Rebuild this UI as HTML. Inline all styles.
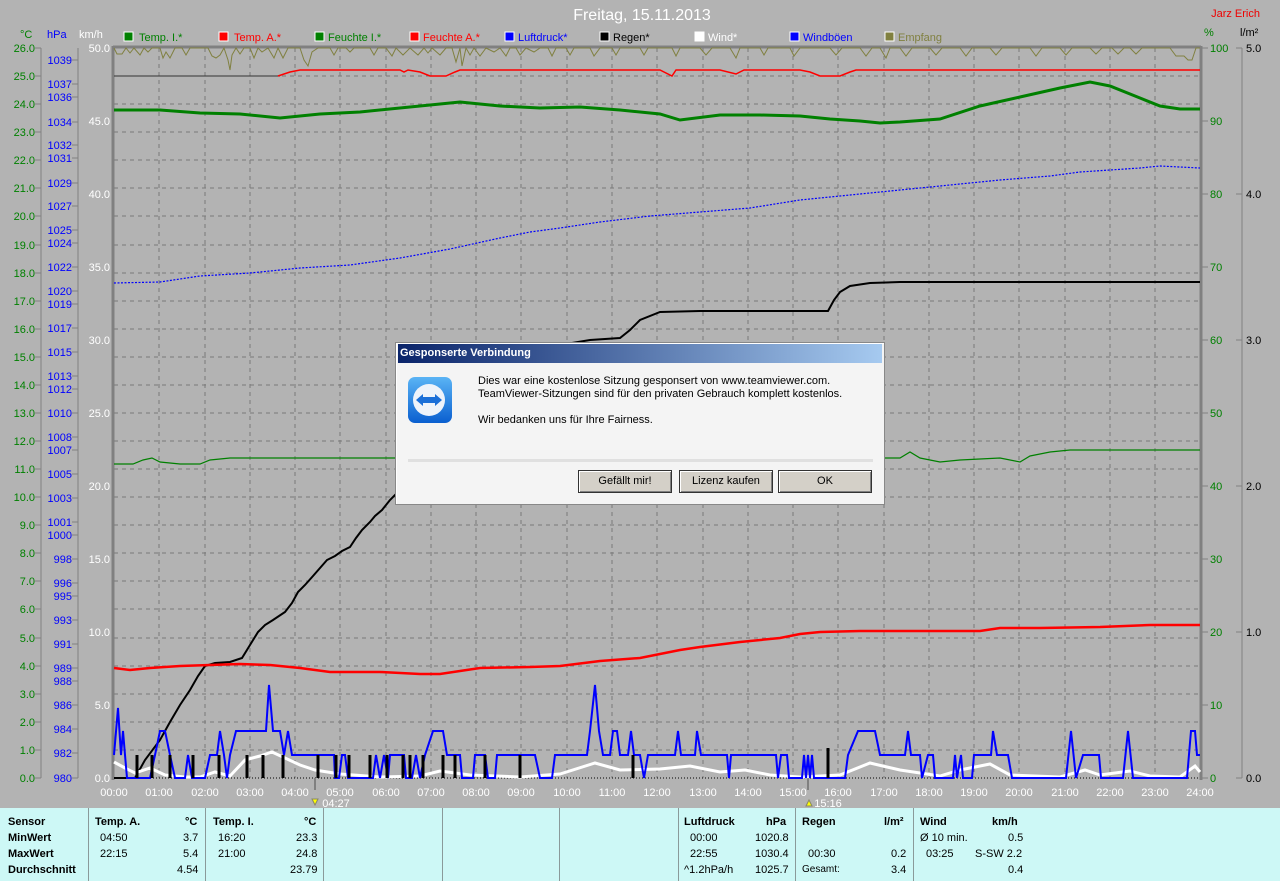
<!DOCTYPE html>
<html><head><meta charset="utf-8"><style>
html,body{margin:0;padding:0;width:1280px;height:881px;overflow:hidden;background:#b3b3b3;font-family:"Liberation Sans",sans-serif}
svg text{font-family:"Liberation Sans",sans-serif}
.tbl{position:absolute;left:0;top:808px;width:1280px;height:73px;background:#cdf8f6;font-size:11px;color:#000}
.tbl div{position:absolute;white-space:nowrap}
.sep{top:0;height:73px;width:1px;background:#8a9a9a}
.b{font-weight:bold}
.dlg{position:absolute;left:395px;top:342px;width:488px;height:161px;background:#f4f4f4;border:1px solid #888;box-shadow:inset 1px 1px 0 #fff}
.ttl{position:absolute;left:2px;top:1px;right:2px;height:19px;background:linear-gradient(to right,#0a246a,#a6caf0);color:#fff;font:bold 11px "Liberation Sans",sans-serif;line-height:19px;padding-left:2px}
.msg{position:absolute;left:82px;font-size:11px;color:#000;white-space:nowrap}
.btn{position:absolute;top:127px;height:21px;background:#d4d0c8;border:1px solid #333;box-shadow:inset 1px 1px 0 #fff,inset -1px -1px 0 #808080;font-size:11px;text-align:center;line-height:21px;color:#000}
</style></head><body>
<svg width="1280" height="808" style="position:absolute;left:0;top:0" xmlns="http://www.w3.org/2000/svg">
<text x="642" y="20" fill="#fff" font-size="16" text-anchor="middle">Freitag, 15.11.2013</text>
<text x="1260" y="17" fill="#e00" font-size="11" text-anchor="end">Jarz Erich</text>
<g font-size="11">
<text x="20" y="38" fill="#008000">°C</text><text x="47" y="38" fill="#00f">hPa</text><text x="79" y="38" fill="#fff">km/h</text>
<text x="1204" y="36" fill="#008000">%</text><text x="1240" y="36" fill="#000">l/m²</text>
<rect x="124" y="32" width="9" height="9" fill="#008000" stroke="#fff"/><text x="139" y="41" fill="#008000">Temp. I.*</text>
<rect x="219" y="32" width="9" height="9" fill="#f00" stroke="#fff"/><text x="234" y="41" fill="#f00">Temp. A.*</text>
<rect x="315" y="32" width="9" height="9" fill="#008000" stroke="#fff"/><text x="328" y="41" fill="#008000">Feuchte I.*</text>
<rect x="410" y="32" width="9" height="9" fill="#f00" stroke="#fff"/><text x="423" y="41" fill="#f00">Feuchte A.*</text>
<rect x="505" y="32" width="9" height="9" fill="#00f" stroke="#fff"/><text x="518" y="41" fill="#00f">Luftdruck*</text>
<rect x="600" y="32" width="9" height="9" fill="#000" stroke="#fff"/><text x="613" y="41" fill="#000">Regen*</text>
<rect x="695" y="32" width="9" height="9" fill="#fff" stroke="#fff"/><text x="708" y="41" fill="#fff">Wind*</text>
<rect x="790" y="32" width="9" height="9" fill="#00f" stroke="#fff"/><text x="803" y="41" fill="#00f">Windböen</text>
<rect x="885" y="32" width="9" height="9" fill="#808040" stroke="#fff"/><text x="898" y="41" fill="#808040">Empfang</text>
</g>
<!-- axes lines -->
<g stroke="#808080" stroke-width="1">
<line x1="41" y1="48" x2="41" y2="778"/><line x1="78" y1="48" x2="78" y2="778"/>
<line x1="1242" y1="48" x2="1242" y2="778"/>
</g>
<line x1="113" y1="46" x2="113" y2="780" stroke="#808080" stroke-width="3"/>
<line x1="1201" y1="46" x2="1201" y2="780" stroke="#808080" stroke-width="3"/>
<line x1="113" y1="47" x2="1201" y2="47" stroke="#808080" stroke-width="3"/>
<!-- grid -->
<g stroke="#7a7a7a" stroke-dasharray="4,4" stroke-width="1">
<path d="M114 76H1200M114 104H1200M114 132H1200M114 160H1200M114 188H1200M114 216H1200M114 245H1200M114 273H1200M114 301H1200M114 329H1200M114 357H1200M114 385H1200M114 413H1200M114 441H1200M114 469H1200M114 497H1200M114 525H1200M114 553H1200M114 581H1200M114 609H1200M114 638H1200M114 666H1200M114 694H1200M114 722H1200M114 750H1200"/>
<path d="M159 48V778M205 48V778M250 48V778M295 48V778M340 48V778M386 48V778M431 48V778M476 48V778M521 48V778M567 48V778M612 48V778M657 48V778M703 48V778M748 48V778M793 48V778M838 48V778M884 48V778M929 48V778M974 48V778M1019 48V778M1065 48V778M1110 48V778M1155 48V778"/>
</g>
<line x1="114" y1="778" x2="1200" y2="778" stroke="#000" stroke-dasharray="1,2"/>
<!-- ticks -->
<g stroke="#808080">
<path d="M35 48h6M35 76h6M35 104h6M35 132h6M35 160h6M35 188h6M35 216h6M35 245h6M35 273h6M35 301h6M35 329h6M35 357h6M35 385h6M35 413h6M35 441h6M35 469h6M35 497h6M35 525h6M35 553h6M35 581h6M35 609h6M35 638h6M35 666h6M35 694h6M35 722h6M35 750h6M35 778h6"/>
<path d="M72 60h6M72 84h6M72 97h6M72 122h6M72 145h6M72 158h6M72 183h6M72 206h6M72 230h6M72 243h6M72 267h6M72 291h6M72 304h6M72 328h6M72 352h6M72 376h6M72 389h6M72 413h6M72 437h6M72 450h6M72 474h6M72 498h6M72 522h6M72 535h6M72 559h6M72 583h6M72 596h6M72 620h6M72 644h6M72 668h6M72 681h6M72 705h6M72 729h6M72 753h6M72 778h6"/>
<path d="M1202 48h6M1202 121h6M1202 194h6M1202 267h6M1202 340h6M1202 413h6M1202 486h6M1202 559h6M1202 632h6M1202 705h6M1202 778h6"/>
<path d="M1236 48h6M1236 194h6M1236 340h6M1236 486h6M1236 632h6M1236 778h6"/>
</g>
<g font-size="11" fill="#008000" text-anchor="end">
<text x="35" y="52">26.0</text><text x="35" y="80">25.0</text><text x="35" y="108">24.0</text><text x="35" y="136">23.0</text><text x="35" y="164">22.0</text><text x="35" y="192">21.0</text><text x="35" y="220">20.0</text><text x="35" y="249">19.0</text><text x="35" y="277">18.0</text><text x="35" y="305">17.0</text><text x="35" y="333">16.0</text><text x="35" y="361">15.0</text><text x="35" y="389">14.0</text><text x="35" y="417">13.0</text><text x="35" y="445">12.0</text><text x="35" y="473">11.0</text><text x="35" y="501">10.0</text><text x="35" y="529">9.0</text><text x="35" y="557">8.0</text><text x="35" y="585">7.0</text><text x="35" y="613">6.0</text><text x="35" y="642">5.0</text><text x="35" y="670">4.0</text><text x="35" y="698">3.0</text><text x="35" y="726">2.0</text><text x="35" y="754">1.0</text><text x="35" y="782">0.0</text>
</g>
<g font-size="11" fill="#00f" text-anchor="end">
<text x="72" y="64">1039</text><text x="72" y="88">1037</text><text x="72" y="101">1036</text><text x="72" y="126">1034</text><text x="72" y="149">1032</text><text x="72" y="162">1031</text><text x="72" y="187">1029</text><text x="72" y="210">1027</text><text x="72" y="234">1025</text><text x="72" y="247">1024</text><text x="72" y="271">1022</text><text x="72" y="295">1020</text><text x="72" y="308">1019</text><text x="72" y="332">1017</text><text x="72" y="356">1015</text><text x="72" y="380">1013</text><text x="72" y="393">1012</text><text x="72" y="417">1010</text><text x="72" y="441">1008</text><text x="72" y="454">1007</text><text x="72" y="478">1005</text><text x="72" y="502">1003</text><text x="72" y="526">1001</text><text x="72" y="539">1000</text><text x="72" y="563">998</text><text x="72" y="587">996</text><text x="72" y="600">995</text><text x="72" y="624">993</text><text x="72" y="648">991</text><text x="72" y="672">989</text><text x="72" y="685">988</text><text x="72" y="709">986</text><text x="72" y="733">984</text><text x="72" y="757">982</text><text x="72" y="782">980</text>
</g>
<g font-size="11" fill="#fff" text-anchor="end">
<text x="110" y="52">50.0</text><text x="110" y="125">45.0</text><text x="110" y="198">40.0</text><text x="110" y="271">35.0</text><text x="110" y="344">30.0</text><text x="110" y="417">25.0</text><text x="110" y="490">20.0</text><text x="110" y="563">15.0</text><text x="110" y="636">10.0</text><text x="110" y="709">5.0</text><text x="110" y="782">0.0</text>
</g>
<g font-size="11" fill="#008000">
<text x="1210" y="52">100</text><text x="1210" y="125">90</text><text x="1210" y="198">80</text><text x="1210" y="271">70</text><text x="1210" y="344">60</text><text x="1210" y="417">50</text><text x="1210" y="490">40</text><text x="1210" y="563">30</text><text x="1210" y="636">20</text><text x="1210" y="709">10</text><text x="1210" y="782">0</text>
</g>
<g font-size="11" fill="#000">
<text x="1246" y="52">5.0</text><text x="1246" y="198">4.0</text><text x="1246" y="344">3.0</text><text x="1246" y="490">2.0</text><text x="1246" y="636">1.0</text><text x="1246" y="782">0.0</text>
</g>
<g font-size="11" fill="#fff" text-anchor="middle">
<text x="114" y="796">00:00</text><text x="159" y="796">01:00</text><text x="205" y="796">02:00</text><text x="250" y="796">03:00</text><text x="295" y="796">04:00</text><text x="340" y="796">05:00</text><text x="386" y="796">06:00</text><text x="431" y="796">07:00</text><text x="476" y="796">08:00</text><text x="521" y="796">09:00</text><text x="567" y="796">10:00</text><text x="612" y="796">11:00</text><text x="657" y="796">12:00</text><text x="703" y="796">13:00</text><text x="748" y="796">14:00</text><text x="793" y="796">15:00</text><text x="838" y="796">16:00</text><text x="884" y="796">17:00</text><text x="929" y="796">18:00</text><text x="974" y="796">19:00</text><text x="1019" y="796">20:00</text><text x="1065" y="796">21:00</text><text x="1110" y="796">22:00</text><text x="1155" y="796">23:00</text><text x="1200" y="796">24:00</text>
<text x="336" y="807">04:27</text><text x="828" y="807">15:16</text>
</g>
<line x1="315" y1="778" x2="315" y2="790" stroke="#808080" stroke-width="2"/>
<line x1="808" y1="778" x2="808" y2="790" stroke="#808080" stroke-width="2"/>
<path d="M312 799l3 6 3-6z" fill="#ff0" stroke="#886"/>
<path d="M806 806l3-6 3 6z" fill="#ff0" stroke="#886"/>
<!-- Empfang -->
<polyline fill="none" stroke="#808040" stroke-width="1" points="114,48 117,54 122,54 126,48 130,53 134,48 140,55 144,48 148,52 152,48 160,48 163,58 166,52 170,58 175,48 182,48 186,55 190,48 208,48 212,56 216,58 220,55 224,48 228,60 230,70 232,55 236,48 240,54 244,48 250,48 254,58 258,48 262,52 268,48 274,58 278,48 283,58 288,48 300,48 304,60 308,66 312,52 318,48 330,48 334,55 338,48 346,48 350,52 354,48 370,48 374,55 378,48 386,48 392,56 396,48 403,55 410,48 418,55 424,48 428,53 432,48 440,55 446,48 452,48 456,62 460,48 462,66 466,48 470,55 474,48 480,56 486,48 494,52 500,48 506,56 510,48 516,48 520,55 526,48 534,52 540,48 548,48 552,56 556,48 566,48 570,55 574,48 590,48 594,56 600,48 612,48 616,55 620,48 640,48 644,55 648,48 672,48 676,56 680,48 700,48 706,55 712,48 730,48 736,58 740,48 760,48 764,55 768,48 790,48 794,56 800,48 830,48 836,55 842,48 860,48 866,56 872,48 880,48 886,58 890,48 900,48 906,56 912,48 930,48 936,55 942,48 960,48 966,56 972,48 990,48 996,55 1002,48 1030,48 1036,56 1042,48 1060,48 1066,55 1072,48 1090,48 1096,54 1102,48 1112,48 1118,54 1124,48 1130,48 1136,54 1142,48 1170,48 1176,56 1184,56 1188,60 1192,60 1196,48 1200,48"/>
<!-- Temp A top (red) with black start -->
<polyline fill="none" stroke="#333" stroke-width="1" points="114,76 280,76"/>
<polyline fill="none" stroke="#f00" stroke-width="1.5" points="278,76 290,72 300,70 400,70 404,72 408,70 420,72 430,76 446,76 455,72 460,70 660,70 672,76 676,70 720,70 736,74 744,70 800,70 810,72 820,76 840,76 850,72 856,70 1200,70"/>
<!-- Feuchte I green thick -->
<polyline fill="none" stroke="#008000" stroke-width="3" points="114,110 160,110 200,113 240,114 280,118 320,114 360,112 420,106 460,102 500,106 540,108 580,107 620,110 660,114 680,120 720,115 760,115 800,116 830,119 860,121 880,123 900,122 940,119 980,106 1020,97 1060,88 1090,82 1110,86 1140,98 1160,106 1180,109 1200,109"/>
<!-- Luftdruck blue dotted -->
<polyline fill="none" stroke="#00f" stroke-width="1.2" stroke-dasharray="2,1.5" points="114,283 160,282 200,276 250,273 300,268 350,265 400,258 450,249 500,238 530,232 560,228 600,222 650,216 700,212 750,208 800,200 850,195 900,190 950,185 1000,180 1050,176 1080,172 1110,170 1140,168 1160,166 1200,168"/>
<!-- Regen cumulative black -->
<polyline fill="none" stroke="#000" stroke-width="2" points="114,778 135,778 145,760 160,740 170,722 180,705 190,690 198,676 205,666 215,663 230,662 242,658 250,645 258,632 265,625 273,620 285,612 292,603 298,592 305,585 313,576 320,568 327,560 335,556 342,551 350,547 356,538 362,530 370,522 375,516 382,510 390,500 400,490 410,476 420,466 430,450 440,440 450,420 470,400 490,385 510,370 530,355 560,345 590,340 620,338 630,330 640,320 660,312 700,311 750,311 800,311 828,311 834,300 840,292 850,286 870,283 900,282 1200,282"/>
<!-- Feuchte A green thin -->
<polyline fill="none" stroke="#008000" stroke-width="1.2" points="114,464 133,464 143,460 152,458 160,462 180,464 200,464 210,460 230,458 300,458 900,458 910,452 920,458 940,462 960,460 1000,458 1020,462 1030,456 1050,452 1070,450 1200,450"/>
<!-- Temp I red thick -->
<polyline fill="none" stroke="#f00" stroke-width="2.5" points="114,668 130,670 150,668 180,666 240,664 270,665 300,668 330,672 380,672 420,674 440,674 480,668 530,667 560,666 600,661 640,658 680,650 700,647 740,642 780,638 800,634 820,632 860,631 980,631 1000,628 1040,628 1100,627 1150,625 1200,625"/>
<!-- white gust -->
<polyline fill="none" stroke="#fff" stroke-width="3" points="114,762 125,768 135,773 150,768 165,775 185,777 200,777 215,772 230,776 245,760 260,756 272,752 285,758 300,765 315,770 340,774 380,777 420,776 440,771 470,775 520,777 560,774 595,763 620,770 660,769 690,766 720,772 745,770 770,775 800,777 840,775 870,763 900,770 940,776 960,770 990,764 1010,775 1060,777 1085,770 1100,775 1130,771 1150,776 1180,777 1195,766 1200,772"/>
<!-- wind blue -->
<polyline fill="none" stroke="#00f" stroke-width="2" points="114,755 118,708 121,755 123,731 125,755 127,778 150,778 155,755 160,731 165,731 170,755 175,778 185,778 188,755 192,778 205,778 210,755 217,755 220,731 224,755 227,778 230,755 236,731 266,731 269,685 273,731 280,731 284,755 288,731 292,755 334,755 335,778 339,778 342,755 345,755 348,778 373,778 376,755 380,778 384,755 388,778 390,755 404,755 406,778 412,778 416,755 420,778 425,755 433,731 443,731 447,755 460,755 462,778 473,778 475,755 485,755 488,778 495,778 497,755 535,755 540,778 552,778 555,755 587,755 590,731 595,685 599,731 603,755 610,755 613,731 617,731 620,755 628,755 631,731 634,755 640,755 644,778 648,755 675,755 678,731 681,755 695,755 697,731 701,755 727,755 729,778 731,755 776,755 778,778 781,755 787,755 789,778 802,778 804,755 806,778 808,755 810,778 812,755 814,778 845,778 848,755 858,731 875,731 880,755 905,755 908,731 911,755 920,755 922,778 928,755 933,755 935,778 953,778 955,755 957,778 961,755 963,778 972,778 974,755 991,755 993,731 997,755 1008,755 1012,778 1066,778 1071,731 1076,778 1083,755 1099,755 1101,778 1123,778 1128,731 1133,778 1187,778 1191,731 1195,731 1197,755 1200,755"/>
<!-- rain bars -->
<g stroke="#000" stroke-width="3">
<path d="M137 778V755M152 778V755M170 778V755M193 778V755M219 778V755M247 778V755M263 778V755M283 778V755M318 778V755M336 778V755M349 778V755M370 778V755M387 778V755M403 778V755M410 778V755M423 778V755M443 778V755M455 778V755M485 778V755M520 778V755M633 778V755M828 778V748"/>
</g>
</svg>

<div class="dlg">
  <div class="ttl">Gesponserte Verbindung</div>
  <svg width="60" height="60" style="position:absolute;left:8px;top:30px">
    <defs><linearGradient id="g" x1="0" y1="0" x2="0" y2="1"><stop offset="0" stop-color="#5ab4f5"/><stop offset="1" stop-color="#0a5fd0"/></linearGradient></defs>
    <rect x="4" y="4" width="44" height="46" rx="7" fill="url(#g)"/>
    <circle cx="25" cy="27" r="16" fill="#eef3fa"/>
    <path d="M12 27l7-6v3h12v-3l7 6-7 6v-3h-12v3z" fill="#1a6fd8"/>
  </svg>
  <div class="msg" style="top:32px">Dies war eine kostenlose Sitzung gesponsert von www.teamviewer.com.</div>
  <div class="msg" style="top:45px">TeamViewer-Sitzungen sind für den privaten Gebrauch komplett kostenlos.</div>
  <div class="msg" style="top:71px">Wir bedanken uns für Ihre Fairness.</div>
  <div style="position:absolute;left:12px;top:116px;width:465px;height:3px;background:#e0e0e0"></div>
  <div class="btn" style="left:182px;width:92px">Gefällt mir!</div>
  <div class="btn" style="left:283px;width:92px">Lizenz kaufen</div>
  <div class="btn" style="left:382px;width:92px">OK</div>
</div>

<div class="tbl">
  <div class="sep" style="left:88px"></div><div class="sep" style="left:205px"></div><div class="sep" style="left:323px"></div><div class="sep" style="left:442px"></div><div class="sep" style="left:559px"></div><div class="sep" style="left:678px"></div><div class="sep" style="left:795px"></div><div class="sep" style="left:913px"></div>
  <div class="b" style="left:8px;top:8px">Sensor</div><div class="b" style="left:8px;top:24px">MinWert</div><div class="b" style="left:8px;top:40px">MaxWert</div><div class="b" style="left:8px;top:56px">Durchschnitt</div>
  <div class="b" style="left:95px;top:8px">Temp. A.</div><div class="b" style="left:185px;top:8px">°C</div>
  <div style="left:100px;top:24px">04:50</div><div style="left:183px;top:24px">3.7</div>
  <div style="left:100px;top:40px">22:15</div><div style="left:183px;top:40px">5.4</div>
  <div style="left:177px;top:56px">4.54</div>
  <div class="b" style="left:213px;top:8px">Temp. I.</div><div class="b" style="left:304px;top:8px">°C</div>
  <div style="left:218px;top:24px">16:20</div><div style="left:296px;top:24px">23.3</div>
  <div style="left:218px;top:40px">21:00</div><div style="left:296px;top:40px">24.8</div>
  <div style="left:290px;top:56px">23.79</div>
  <div class="b" style="left:684px;top:8px">Luftdruck</div><div class="b" style="left:766px;top:8px">hPa</div>
  <div style="left:690px;top:24px">00:00</div><div style="left:755px;top:24px">1020.8</div>
  <div style="left:690px;top:40px">22:55</div><div style="left:755px;top:40px">1030.4</div>
  <div style="left:684px;top:56px">^1.2hPa/h</div><div style="left:755px;top:56px">1025.7</div>
  <div class="b" style="left:802px;top:8px">Regen</div><div class="b" style="left:884px;top:8px">l/m²</div>
  <div style="left:808px;top:40px">00:30</div><div style="left:891px;top:40px">0.2</div>
  <div style="left:802px;top:56px;font-size:10px">Gesamt:</div><div style="left:891px;top:56px">3.4</div>
  <div class="b" style="left:920px;top:8px">Wind</div><div class="b" style="left:992px;top:8px">km/h</div>
  <div style="left:920px;top:24px">Ø 10 min.</div><div style="left:1008px;top:24px">0.5</div>
  <div style="left:926px;top:40px">03:25</div><div style="left:975px;top:40px">S-SW 2.2</div>
  <div style="left:1008px;top:56px">0.4</div>
</div>
</body></html>
